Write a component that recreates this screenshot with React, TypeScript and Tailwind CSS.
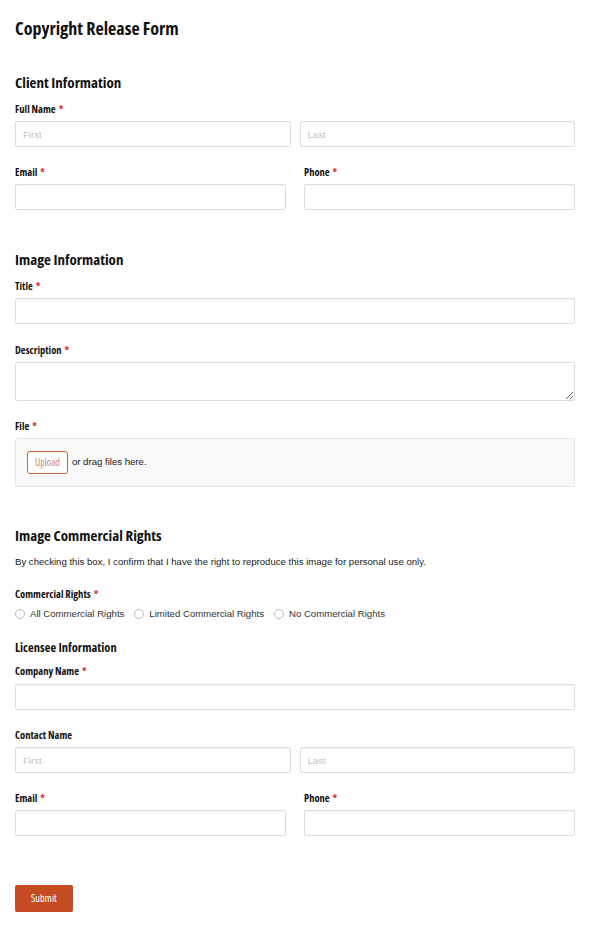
import React from "react";

const cond = "font-['Open_Sans','DejaVu_Sans_Condensed',sans-serif] [font-stretch:75%] font-bold text-[#111]";
const arial = "font-['Liberation_Sans',Arial,sans-serif]";

function Label({ text, required, className = "mb-[5px]" }: { text: string; required?: boolean; className?: string }) {
  return (
    <div className={`${cond} text-[10.5px] leading-[13px] ${className}`}>
      {text}
      {required && <span className="text-[#d33] ml-[3px]">*</span>}
    </div>
  );
}

function Input({ placeholder }: { placeholder?: string }) {
  return (
    <input
      placeholder={placeholder}
      className={`${arial} block h-[26px] w-full rounded-[2px] border border-[#ddd] bg-white px-[7px] text-[9.6px] text-[#333] placeholder:text-[#c4c4c4] shadow-[inset_0_1px_1px_rgba(0,0,0,0.04)] outline-none`}
    />
  );
}

function Radio({ label }: { label: string }) {
  return (
    <label className={`${arial} flex h-[12px] items-center gap-[5px] text-[9.6px] text-[#333]`}>
      <span className="h-[10px] w-[10px] rounded-full border border-[#bbb] bg-white" />
      {label}
    </label>
  );
}

export default function App() {
  return (
    <main className="min-h-screen bg-white px-[15px] pt-[17px] pb-[15px]">
      <h1 className={`${cond} text-[18px] leading-[22px]`}>Copyright Release Form</h1>

      <h2 className={`${cond} text-[15px] leading-[18px] mt-[34px] mb-[12px]`}>Client Information</h2>
      <Label text="Full Name" required />
      <div className="flex gap-[9px]">
        <Input placeholder="First" />
        <Input placeholder="Last" />
      </div>
      <div className="mt-[19px] flex gap-[18px]">
        <div className="flex-1">
          <Label text="Email" required />
          <Input />
        </div>
        <div className="flex-1">
          <Label text="Phone" required />
          <Input />
        </div>
      </div>

      <h2 className={`${cond} text-[15px] leading-[18px] mt-[40px] mb-[12px]`}>Image Information</h2>
      <Label text="Title" required />
      <Input />
      <div className="mt-[20px]">
        <Label text="Description" required />
        <textarea className="block h-[39px] w-full rounded-[2px] border border-[#ddd] bg-white" />
      </div>
      <div className="mt-[19px]">
        <Label text="File" required />
        <div className="flex h-[49px] items-center rounded-[2px] border border-[#e6e6e6] bg-[#f8f8f8] px-[11px]">
          <button className={`${cond} !font-normal h-[23px] rounded-[3px] border border-[#c9633f] bg-white px-[7px] text-[10px] !text-[#c98a73]`}>
            Upload
          </button>
          <span className={`${arial} ml-[4px] text-[9.6px] text-[#222]`}>or drag files here.</span>
        </div>
      </div>

      <h2 className={`${cond} text-[15px] leading-[18px] mt-[39px]`}>Image Commercial Rights</h2>
      <p className={`${arial} mt-[12px] text-[9.6px] leading-[12px] text-[#222]`}>
        By checking this box, I confirm that I have the right to reproduce this image for personal use only.
      </p>
      <div className="mt-[20px]">
        <Label text="Commercial Rights" required className="mb-[7px]" />
        <div className="flex gap-[10px]">
          <Radio label="All Commercial Rights" />
          <Radio label="Limited Commercial Rights" />
          <Radio label="No Commercial Rights" />
        </div>
      </div>

      <h3 className={`${cond} text-[12.5px] leading-[16px] mt-[20px] mb-[9px]`}>Licensee Information</h3>
      <Label text="Company Name" required className="mb-[6px]" />
      <Input />
      <div className="mt-[19px]">
        <Label text="Contact Name" />
        <div className="flex gap-[9px]">
          <Input placeholder="First" />
          <Input placeholder="Last" />
        </div>
      </div>
      <div className="mt-[19px] flex gap-[18px]">
        <div className="flex-1">
          <Label text="Email" required />
          <Input />
        </div>
        <div className="flex-1">
          <Label text="Phone" required />
          <Input />
        </div>
      </div>

      <button className={`${cond} mt-[49px] h-[27px] rounded-[2px] bg-[#c44b22] px-[16px] text-[10.5px] !font-normal !text-white`}>
        Submit
      </button>
    </main>
  );
}
